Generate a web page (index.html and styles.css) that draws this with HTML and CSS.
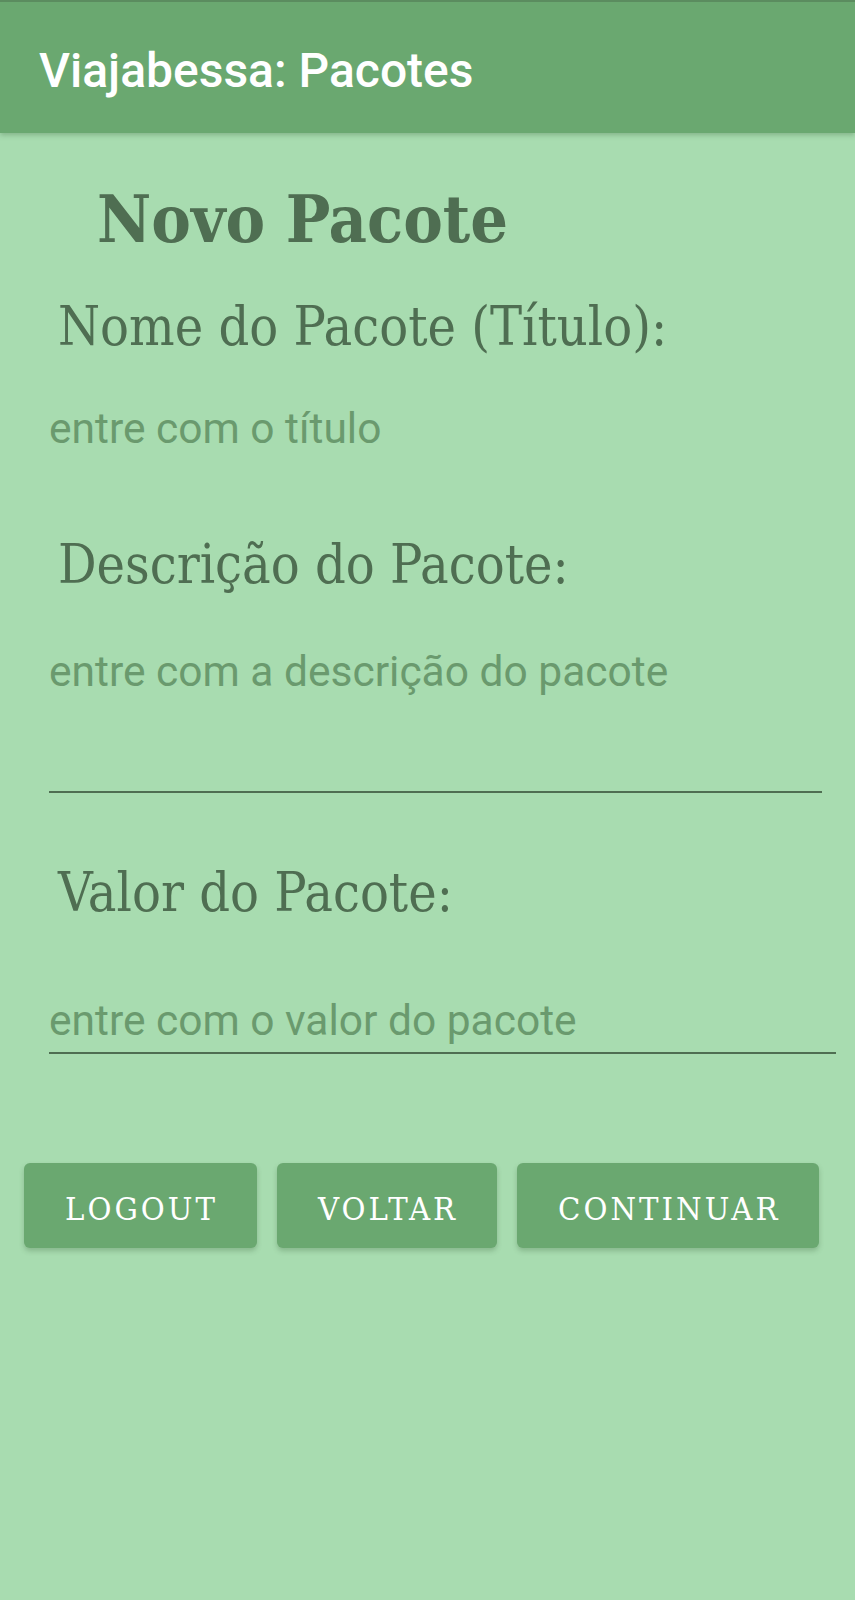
FILE: index.html
```html
<!DOCTYPE html>
<html lang="pt">
<head>
<meta charset="utf-8">
<title>Viajabessa: Pacotes</title>
<link rel="stylesheet" href="styles.css">
</head>
<body>
<header class="appbar">
  <span class="appbar-title">Viajabessa: Pacotes</span>
</header>
<main class="content">
  <h1 class="page-title">Novo Pacote</h1>

  <label class="field-label label-nome">Nome do Pacote (Título):</label>
  <div class="input input-plain"><span class="placeholder">entre com o título</span></div>

  <label class="field-label label-desc">Descrição do Pacote:</label>
  <div class="input input-multi"><span class="placeholder">entre com a descrição do pacote</span></div>

  <label class="field-label label-valor">Valor do Pacote:</label>
  <div class="input input-valor"><span class="placeholder">entre com o valor do pacote</span></div>

  <div class="actions">
    <button class="btn">LOGOUT</button>
    <button class="btn">VOLTAR</button>
    <button class="btn">CONTINUAR</button>
  </div>
</main>
</body>
</html>
```

FILE: styles.css
```css
html, body {
  margin: 0;
  padding: 0;
}
body {
  background: #a8dcb0;
  width: 855px;
  min-height: 1600px;
  font-family: "DejaVu Serif", serif;
  font-stretch: condensed;
}
.appbar {
  height: 131px;
  background: #6aa870;
  border-top: 2px solid #5b8c5f;
  box-shadow: 0 2px 5px rgba(60, 100, 60, 0.35);
  display: flex;
  align-items: center;
  padding-left: 39px;
  position: relative;
  z-index: 1;
}
.appbar-title {
  font-family: Roboto, "Noto Sans", sans-serif;
  font-stretch: normal;
  font-weight: 500;
  font-size: 48px;
  color: #ffffff;
  line-height: 1;
  margin-top: 6px;
}
.content {
  padding: 0 0 0 49px;
  color: #4f6e52;
}
.page-title {
  margin: 0;
  padding-left: 48px;
  font-family: "DejaVu Serif", serif;
  font-stretch: condensed;
  font-weight: bold;
  font-size: 66px;
  line-height: 70px;
  height: 70px;
  padding-top: 51px;
  color: #4f6e52;
}
.field-label {
  display: block;
  margin-left: 9px;
  font-size: 53.5px;
  line-height: 56px;
  color: #4f6e52;
}
.label-nome {
  margin-top: 45px;
}
.input {
  font-family: Roboto, "Noto Sans", sans-serif;
  font-stretch: normal;
  font-size: 42.5px;
  line-height: 42px;
  color: #6a9a6e;
}
.input-plain {
  margin-top: 53px;
}
.label-desc {
  margin-top: 87px;
}
.input-multi {
  margin-top: 58px;
  width: 773px;
  height: 140px;
  border-bottom: 2px solid #4f6e52;
}
.label-valor {
  margin-top: 72px;
}
.input-valor {
  margin-top: 79px;
  width: 787px;
  padding-bottom: 10px;
  border-bottom: 2px solid #4f6e52;
}
.actions {
  display: flex;
  gap: 20px;
  margin-left: -25px;
  margin-top: 109px;
}
.btn {
  height: 85px;
  padding: 6px 39px 0 41px;
  border: none;
  border-radius: 6px;
  background: #6aa870;
  color: #ffffff;
  font-family: "DejaVu Serif", serif;
  font-stretch: condensed;
  font-size: 32.5px;
  letter-spacing: 3px;
  box-shadow: 0 3px 5px rgba(60, 100, 60, 0.3);
}
```
